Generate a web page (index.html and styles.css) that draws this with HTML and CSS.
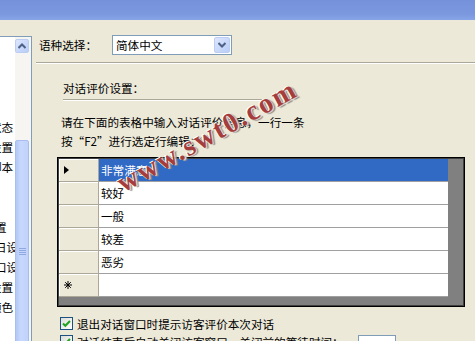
FILE: index.html
```html
<!DOCTYPE html>
<html lang="zh-CN">
<head>
    <meta charset="UTF-8">
    <meta name="viewport" content="width=device-width, initial-scale=1.0">
    <title>对话评价设置</title>
    <link rel="stylesheet" href="styles.css">
</head>
<body>
<div class="titlebar"></div>
<div class="window">
    <aside class="sidebar">
        <div class="tree">
            <div class="tree-items">
                <div class="item">状态</div>
                <div class="item">设置</div>
                <div class="item">脚本</div>
                <div class="item empty"></div>
                <div class="item empty"></div>
                <div class="item sub">置</div>
                <div class="item sub">日设置</div>
                <div class="item sub">口设置</div>
                <div class="item">设置</div>
                <div class="item">颜色</div>
            </div>
            <div class="vscroll">
                <div class="sb-btn">
                    <svg width="8" height="6" viewBox="0 0 8 6"><path d="M0.5 5 L4 1.5 L7.5 5" fill="none" stroke="#4d6185" stroke-width="2"/></svg>
                </div>
                <div class="sb-thumb">
                    <svg width="7" height="7" viewBox="0 0 7 7"><path d="M0 0.5 H7 M0 2.5 H7 M0 4.5 H7 M0 6.5 H7" stroke="#8fa8e0" stroke-width="1"/></svg>
                </div>
            </div>
        </div>
    </aside>

    <main class="main">
        <div class="lang-row">
            <span class="label">语种选择：</span>
            <div class="combo">
                <span class="combo-text">简体中文</span>
                <span class="combo-btn">
                    <svg width="8" height="6" viewBox="0 0 8 6"><path d="M0.5 1 L4 4.5 L7.5 1" fill="none" stroke="#4d6185" stroke-width="2"/></svg>
                </span>
            </div>
        </div>
        <div class="sep"></div>

        <section class="rating">
            <div class="group-title">对话评价设置：</div>
            <div class="group-line"></div>
            <p class="hint">请在下面的表格中输入对话评价信息，一行一条<br>按“F2”进行选定行编辑：</p>

            <div class="grid">
                <div class="grid-row selected">
                    <div class="row-head">
                        <svg width="5" height="8" viewBox="0 0 5 8"><path d="M0 0 L5 4 L0 8 Z" fill="#000"/></svg>
                    </div>
                    <div class="cell">非常满意</div>
                </div>
                <div class="grid-row">
                    <div class="row-head"></div>
                    <div class="cell">较好</div>
                </div>
                <div class="grid-row">
                    <div class="row-head"></div>
                    <div class="cell">一般</div>
                </div>
                <div class="grid-row">
                    <div class="row-head"></div>
                    <div class="cell">较差</div>
                </div>
                <div class="grid-row">
                    <div class="row-head"></div>
                    <div class="cell">恶劣</div>
                </div>
                <div class="grid-row">
                    <div class="row-head">
                        <svg width="8" height="8" viewBox="0 0 8 8"><path d="M4 0 V8 M0 4 H8 M1.2 1.2 L6.8 6.8 M6.8 1.2 L1.2 6.8" stroke="#000" stroke-width="1"/></svg>
                    </div>
                    <div class="cell"></div>
                </div>
            </div>

            <label class="check">
                <span class="box">
                    <svg width="13" height="13" viewBox="0 0 13 13"><path d="M3 6.5 L5.3 8.8 L10 4" fill="none" stroke="#21a121" stroke-width="2"/></svg>
                </span>
                退出对话窗口时提示访客评价本次对话
            </label>
            <label class="check second">
                <span class="box">
                    <svg width="13" height="13" viewBox="0 0 13 13"><path d="M3 6.5 L5.3 8.8 L10 4" fill="none" stroke="#21a121" stroke-width="2"/></svg>
                </span>
                对话结束后自动关闭访客窗口，关闭前的等待时间：
                <span class="num-input"></span>
            </label>
        </section>
    </main>
</div>

<div class="watermark">www.swt0.com</div>
</body>
</html>
```

FILE: styles.css
```css
* {
    box-sizing: border-box;
}

body {
    margin: 0;
    width: 475px;
    height: 341px;
    overflow: hidden;
    position: relative;
    background-color: #ece9d8;
    font-family: "Noto Sans CJK SC", "Liberation Sans", sans-serif;
    font-size: 11.6px;
    color: #000;
}

.titlebar {
    height: 20px;
    background: linear-gradient(#7591da, #7b98df 70%, #88a5e8);
}

.window {
    display: flex;
    height: 321px;
}

/* left tree list, scrolled so only the tail of each label shows */
.sidebar {
    width: 32px;
    flex: none;
    padding-top: 16px;
}

.tree {
    display: flex;
    height: 100%;
    background-color: #fff;
    border-top: 1px solid #7f9db9;
    border-right: 1px solid #7f9db9;
}

.tree-items {
    width: 15px;
    overflow: hidden;
    padding-top: 80px;
}

.item {
    height: 20px;
    line-height: 20px;
    white-space: nowrap;
    margin-left: -10px;
}

.item.sub {
    margin-left: -5px;
}

.vscroll {
    width: 16px;
    background-color: #f6f5f1;
    padding: 2px 2px 0 0;
}

.sb-btn {
    width: 14px;
    height: 14px;
    display: flex;
    align-items: center;
    justify-content: center;
    border: 1px solid #bccdf4;
    border-radius: 2px;
    background: linear-gradient(135deg, #dde6fd, #b9cdf8);
}

.sb-thumb {
    margin-top: 87px;
    width: 14px;
    height: 240px;
    display: flex;
    justify-content: center;
    padding-top: 107px;
    border: 1px solid #a9bdee;
    border-radius: 2px;
    background: linear-gradient(90deg, #b3c8f7, #c8d8fd 40%, #c0d2fb);
}

.main {
    flex: 1;
    padding-left: 4px;
}

.lang-row {
    display: flex;
    align-items: center;
    padding-top: 15px;
}

.label {
    width: 76px;
    padding-left: 3px;
}

.combo {
    width: 120px;
    height: 20px;
    display: flex;
    align-items: center;
    justify-content: space-between;
    background-color: #fff;
    border: 1px solid #7f9db9;
    padding: 1px 1px 1px 3px;
}

.combo-btn {
    width: 16px;
    height: 16px;
    display: flex;
    align-items: center;
    justify-content: center;
    border: 1px solid #bccdf4;
    border-radius: 2px;
    background: linear-gradient(135deg, #dde6fd, #b9cdf8);
}

.sep {
    margin-top: 7px;
    border-top: 1px solid #aca899;
    border-bottom: 1px solid #fff;
}

.rating {
    padding-left: 21px;
}

.group-title {
    margin-top: 17px;
    margin-left: 6px;
    line-height: 14px;
}

.group-line {
    width: 199px;
    margin-top: 4px;
    margin-left: 6px;
    border-top: 1px solid #aca899;
    border-bottom: 1px solid #fff;
}

.hint {
    margin: 12px 0 0 4px;
    line-height: 19px;
}

.grid {
    margin-top: 6px;
    width: 408px;
    height: 150px;
    padding: 1px;
    border: 1px solid #000;
    box-shadow: inset 0 0 0 1px #404040;
    background-color: #808080;
}

.grid-row {
    display: flex;
    width: 389px;
    height: 23px;
}

.row-head {
    width: 40px;
    display: flex;
    align-items: center;
    padding-left: 5px;
    background-color: #ece9d8;
    border-right: 1px solid #aca899;
    border-bottom: 1px solid #aca899;
    box-shadow: inset 1px 1px 0 #fff;
}

.cell {
    flex: 1;
    padding-left: 2px;
    line-height: 22px;
    background-color: #fff;
    border-bottom: 1px solid #a0a0a0;
}

.grid-row.selected .cell {
    background-color: #316ac5;
    color: #fff;
}

.check {
    display: flex;
    align-items: center;
    gap: 4px;
    height: 13px;
    margin: 10px 0 0 3px;
    white-space: nowrap;
}

.check.second {
    margin-top: 5px;
}

.box {
    width: 13px;
    height: 13px;
    flex: none;
    border: 1px solid #1c5180;
    background: linear-gradient(135deg, #dcdcd7, #fff);
    display: flex;
}

.box svg {
    margin: -1px;
}

.num-input {
    width: 38px;
    height: 20px;
    margin: 6px 0 0 10px;
    background-color: #fff;
    border: 1px solid #7f9db9;
}

.watermark {
    position: absolute;
    left: 207px;
    top: 136px;
    transform: translate(-50%, -50%) rotate(-29deg);
    font-family: "Liberation Serif", serif;
    font-weight: bold;
    font-size: 28px;
    letter-spacing: 2px;
    white-space: nowrap;
    color: #a53d3d;
    text-shadow: -1px -1px 0 #fff, 1px 1px 0 #d8d4c8, 2px 2px 1px #8a8a8a;
}
```
